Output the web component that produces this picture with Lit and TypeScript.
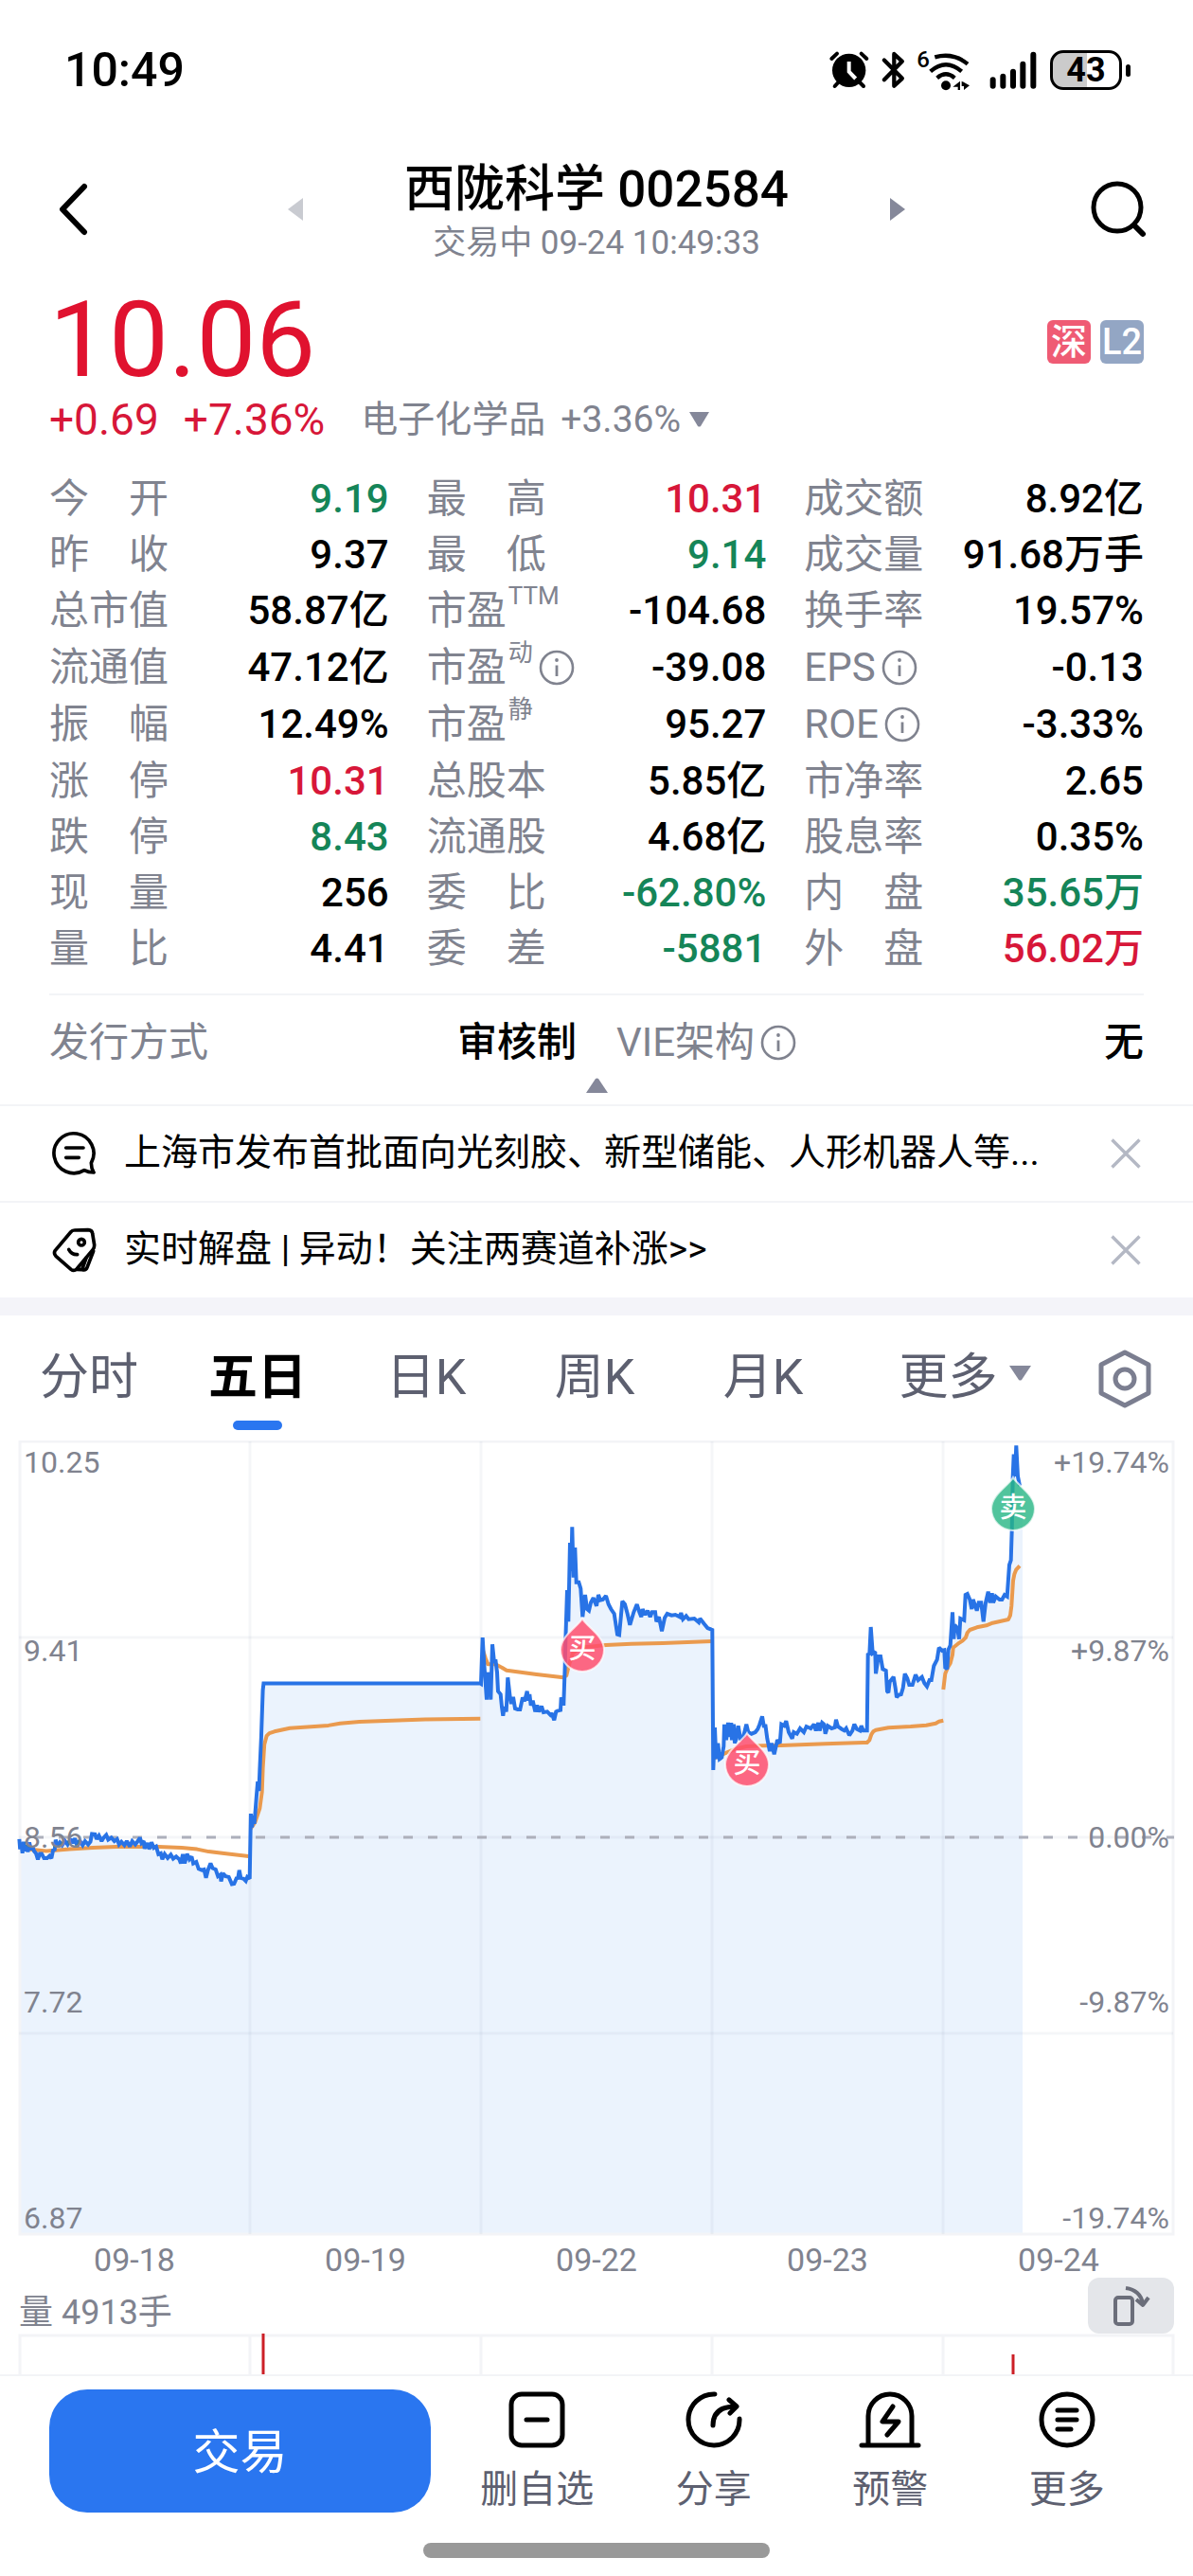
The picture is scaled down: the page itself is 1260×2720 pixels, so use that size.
import { LitElement, html, svg, css, nothing } from "lit";
import { customElement, state } from "lit/decorators.js";
import { classMap } from "lit/directives/class-map.js";

type Tone = "up" | "down" | "";
interface Stat {
  label: string;
  value: string;
  tone?: Tone;
  sup?: string;
  info?: boolean;
}

const s = (label: string, value: string, tone: Tone = "", sup = "", info = false): Stat => ({ label, value, tone, sup, info });

const STATS: Stat[][] = [
  [s("今开", "9.19", "down"), s("最高", "10.31", "up"), s("成交额", "8.92亿")],
  [s("昨收", "9.37"), s("最低", "9.14", "down"), s("成交量", "91.68万手")],
  [s("总市值", "58.87亿"), s("市盈", "-104.68", "", "TTM"), s("换手率", "19.57%")],
  [s("流通值", "47.12亿"), s("市盈", "-39.08", "", "动", true), s("EPS", "-0.13", "", "", true)],
  [s("振幅", "12.49%"), s("市盈", "95.27", "", "静"), s("ROE", "-3.33%", "", "", true)],
  [s("涨停", "10.31", "up"), s("总股本", "5.85亿"), s("市净率", "2.65")],
  [s("跌停", "8.43", "down"), s("流通股", "4.68亿"), s("股息率", "0.35%")],
  [s("现量", "256"), s("委比", "-62.80%", "down"), s("内盘", "35.65万", "down")],
  [s("量比", "4.41"), s("委差", "-5881", "down"), s("外盘", "56.02万", "up")],
];

/* Converts a run of "x,y" samples, taken on a finer grid, to chart units. */
function plot(x0: number, y0: number, sx: number, sy: number, data: string): string[] {
  return data
    .trim()
    .split(/\s+/)
    .map((p) => {
      const [x, y] = p.split(",").map(Number);
      return `${(x0 + x / sx).toFixed(1)},${(y0 + y / sy).toFixed(1)}`;
    });
}

const EARLY = (d: string) => plot(0, -22, 2.45, 2.8, d);
const MID = (d: string) => plot(500, 78, 3, 3, d);
const LATE = (d: string) => plot(745, -2, 3, 3, d);

const PRICE: string[] = [
  ...EARLY(`50,1240 52,1270 55,1250 58,1282 61,1248 64,1275 68,1258 72,1278 76,1250 80,1272 84,1262 88,1275 93,1282
    98,1300 103,1284 108,1284 114,1296 122,1296 128,1290 133,1297 138,1270 141,1275 144,1242 149,1262 155,1250
    161,1258 168,1246 175,1256 183,1240 188,1252 194,1238 200,1262 206,1244 214,1258 220,1246 228,1256 234,1248
    238,1225 246,1226 250,1240 256,1230 263,1246 268,1236 275,1228 280,1242 288,1236 296,1246 303,1240 308,1256
    314,1248 322,1258 328,1246 336,1262 342,1246 350,1256 358,1244 362,1236 366,1252 372,1246 374,1268 382,1252
    386,1270 392,1250 398,1266 404,1262 410,1285 416,1282 420,1300 426,1284 434,1296 442,1286 448,1298 456,1292
    464,1300 468,1312 473,1285 478,1312 484,1284 490,1300 496,1292 500,1312 508,1308 514,1328 522,1332 528,1330
    533,1355 538,1332 545,1312 550,1326 558,1330 564,1350 570,1345 572,1365 577,1342 584,1350 592,1352 600,1373
    606,1372 612,1356 616,1355 619,1332 623,1355 630,1357 636,1364 640,1352 646,1357
    649,1165 652,1205 656,1170 658,1195 660,1168 664,1110 667,1070 670,1098 672,1040 676,940 680,800 682,780 1243,780`),
  ...MID(`24,537 29,390 33,460 38,530 42,587 44,500 48,560 50,500 55,587 60,412 66,470 70,460 75,500 78,560 86,570
    90,610 94,638 98,610 104,625 109,517 116,580 120,600 126,578 132,615 140,618 148,618 156,580 162,592 170,560
    174,590 178,570 182,605 188,590 196,625 202,605 208,625 216,608 222,627 234,625 244,635 248,630 256,652
    262,625 268,622 276,620 278,580 283,600 286,600 290,480 292,400 297,240 301,340 306,90 310,180 313,40 317,200
    322,105 326,215 334,215 340,235 346,325 354,255 360,300 366,305 372,280 380,265 390,290 396,255 402,272
    410,270 420,258 428,285 436,300 446,315 456,380 462,382 472,275 480,285 488,315 496,350 508,310 518,285
    526,310 532,325 536,300 544,318 552,305 560,325 566,310 576,310 580,340 588,325 597,370 606,328 614,315
    628,320 640,318 654,325 658,312 664,332 674,322 682,332 700,330 714,342 718,330 732,348 742,360 754,365`),
  ...LATE(`22,602 25,1050 30,915 34,1015 40,965 45,1015 52,1010 58,975 60,905 66,955 72,900 76,945 82,900 84,955
    90,905 93,965 98,950 104,910 112,955 120,945 130,905 136,930 146,935 158,930 166,920 172,905 180,880 186,915
    190,905 196,950 204,990 210,965 218,1000 228,955 236,965 241,905 250,910 256,895 264,930 275,950 280,930
    290,935 300,918 312,930 320,912 334,918 344,905 350,925 358,900 362,925 370,900 376,905 380,935 388,910
    400,918 410,915 414,890 420,912 432,920 440,925 446,918 456,940 466,925 472,905 480,920 490,925 494,910
    500,925 512,925 515,680 520,685 524,597 530,680 538,675 540,745 548,690 555,690 562,730 572,735 576,800
    580,805 584,770 596,755 602,790 606,820 612,812 620,810 626,790 632,745 640,760 646,780 656,780 666,748
    674,765 686,755 694,775 702,785 710,765 716,765 724,720 734,700 740,662 750,672 757,670 760,725 766,730
    770,668 776,655 783,550 787,635 790,590 798,600 804,635 808,570 820,575 824,495 830,492 838,510 844,540
    848,510 860,545 866,520 874,520 881,580 888,520 896,485 902,520 908,490 912,520 920,500 932,510 940,510
    948,495 956,500 963,400 968,385 971,290 974,120 977,50 981,120 985,22 990,120 996,150`),
];

const AVERAGES: string[][] = [
  EARLY("52,1262 70,1270 120,1275 180,1270 240,1266 300,1263 410,1263 470,1266 510,1270 540,1277 580,1282 643,1291"),
  EARLY("648,1210 660,1190 672,1150 678,1100 680,1030 684,960 690,935 697,927 710,922 750,912 850,904 880,898 930,893 1100,886 1243,884"),
  MID("30,430 38,455 46,475 70,475 90,485 105,494 150,500 200,507 285,517 295,510 302,480 315,440 340,422 420,414 500,410 600,408 755,402"),
  LATE("28,1012 60,998 90,985 130,975 180,973 240,972 380,967 500,963 512,963 520,955 526,937 532,928 540,923 580,916 650,912 700,908 730,902 740,896 754,893"),
  LATE("754,795 760,745 768,725 776,712 783,685 785,662 800,650 815,640 825,630 830,615 838,606 860,598 890,592 910,584 960,573 966,560 970,530 975,450 979,430 985,415 996,403"),
];

const DATES = ["09-18", "09-19", "09-22", "09-23", "09-24"];
const PRICE_AXIS: [string, string, number][] = [
  ["10.25", "+19.74%", 34],
  ["9.41", "+9.87%", 233],
  ["8.56", "0.00%", 430],
  ["7.72", "-9.87%", 604],
  ["6.87", "-19.74%", 832],
];
const MARKS: [string, string, number, number][] = [
  ["买", "buy", 615, 220],
  ["买", "buy", 789, 341],
  ["卖", "sell", 1070, 71],
];

const infoIcon = html`<svg class="info" viewBox="0 0 38 38" aria-hidden="true">
  <circle cx="19" cy="19" r="17" fill="none" stroke="currentColor" stroke-width="2.6" />
  <path d="M19 16.500V28" stroke="currentColor" stroke-width="2.800" />
  <circle cx="19" cy="11" r="1.900" fill="currentColor" />
</svg>`;

const closeIcon = html`<svg viewBox="0 0 32 32" width="32" height="32" aria-hidden="true">
  <path d="M1.500 1.500L30.500 30.500M30.500 1.500L1.500 30.500" stroke="#b4b8c4" stroke-width="3.4" fill="none" />
</svg>`;

@customElement("status-bar")
export class StatusBar extends LitElement {
  static styles = css`
    :host {
      display: flex;
      align-items: center;
      justify-content: space-between;
      height: 148px;
      padding: 0 66px 0 68px;
    }
    .time {
      font-size: 50px;
      font-weight: 500;
    }
    .icons {
      display: flex;
      align-items: center;
      gap: 12px;
    }
    .icons svg {
      display: block;
      overflow: visible;
    }
    .signal {
      margin-left: 8px;
    }
    .battery {
      display: flex;
      align-items: center;
      gap: 4px;
      margin-left: 2px;
    }
    .cell {
      box-sizing: border-box;
      width: 76px;
      height: 42px;
      border: 3px solid #000;
      border-radius: 14px;
      background: linear-gradient(90deg, #cbcbcb 51%, #fff 51%);
      font-size: 36px;
      font-weight: 700;
      line-height: 37px;
      text-align: center;
    }
    .nub {
      width: 5px;
      height: 13px;
      border-radius: 3px;
      background: #000;
    }
    .six {
      font-size: 72px;
      font-weight: 500;
    }
  `;

  render() {
    return html`
      <span class="time">10:49</span>
      <div class="icons">
        <svg width="42" height="40" viewBox="104 73 126 120" aria-hidden="true">
          <circle cx="166" cy="134" r="53" />
          <path d="M111 97L128 81M222 97L205 81M132 172L121 184M200 172L212 184" stroke="#000" stroke-width="12" stroke-linecap="round" />
          <path d="M166 106V138L187 160" fill="none" stroke="#fff" stroke-width="12" />
        </svg>
        <svg width="27" height="40" viewBox="272 70 81 122" aria-hidden="true">
          <path d="M283 99L341 158L315 182V79L341 103L283 162" fill="none" stroke="#000" stroke-width="13" stroke-linecap="round" stroke-linejoin="round" />
        </svg>
        <svg width="56" height="42" viewBox="388 64 168 126" aria-hidden="true">
          <text class="six" x="386" y="119">6</text>
          <path d="M443 86Q502 70 547 108M429 131Q478 88 528 131M450 152Q478 128 506 152" fill="none" stroke="#000" stroke-width="13" />
          <circle cx="478" cy="176" r="15" />
          <path d="M500 180L523 162V190H516V180ZM528 162L553 176L535 190V178H528Z" />
        </svg>
        <svg class="signal" width="50" height="40" viewBox="615 71 150 120" aria-hidden="true">
          <path d="M626 162V181M658 151V181M690 136V181M721 112V181M754 82V181" stroke="#000" stroke-width="18" stroke-linecap="round" />
        </svg>
        <div class="battery"><span class="cell">43</span><span class="nub"></span></div>
      </div>
    `;
  }
}

@customElement("trend-chart")
export class TrendChart extends LitElement {
  static styles = css`
    :host {
      display: block;
    }
    svg {
      display: block;
      width: 100%;
      height: auto;
    }
    .frame {
      fill: none;
      stroke: #f3f4f7;
      stroke-width: 3;
    }
    .grid {
      stroke: #3c5078;
      stroke-opacity: 0.05;
      stroke-width: 3;
    }
    .zero {
      stroke: #adb0bb;
      stroke-width: 3;
      stroke-dasharray: 10 16;
      stroke-dashoffset: 10;
    }
    .area {
      fill: #ebf3fd;
    }
    .price {
      fill: none;
      stroke: #2873e6;
      stroke-width: 4;
      stroke-linejoin: miter;
      stroke-miterlimit: 2;
    }
    .avg {
      fill: none;
      stroke: #ea9a4e;
      stroke-width: 4;
      stroke-linejoin: round;
    }
    .axis {
      font-size: 32px;
      fill: #80838f;
    }
    .date {
      font-size: 34px;
      fill: #80838f;
      text-anchor: middle;
    }
    .end {
      text-anchor: end;
    }
    .mark {
      stroke: #fff;
      stroke-opacity: 0.7;
      stroke-width: 2;
    }
    .buy {
      fill: #ff4d6d;
      fill-opacity: 0.85;
    }
    .sell {
      fill: #25b583;
      fill-opacity: 0.8;
    }
    .mark-text {
      font-size: 29px;
      font-weight: 500;
      fill: #fff;
      text-anchor: middle;
    }
  `;

  render() {
    const line = PRICE.join(" ");
    return html`
      <svg viewBox="0 0 1260 890" role="img" aria-label="五日">
        <polygon class="area" points="20,838 ${line} 1080,50 1080,838" />
        <rect class="frame" x="21" y="1" width="1218" height="837" />
        ${[264, 508, 752, 996].map((x) => svg`<line class="grid" x1=${x} x2=${x} y1="1" y2="838" />`)}
        ${[208, 419, 626].map((y) => svg`<line class="grid" x1="20" x2="1239" y1=${y} y2=${y} />`)}
        <line class="zero" x1="20" x2="1240" y1="419" y2="419" />
        ${AVERAGES.map((a) => svg`<polyline class="avg" points=${a.join(" ")} />`)}
        <polyline class="price" points=${line} />
        ${PRICE_AXIS.map(
          ([price, pct, y]) => svg`
            <text class="axis" x="25" y=${y}>${price}</text>
            <text class="axis end" x="1235" y=${y}>${pct}</text>`,
        )}
        ${MARKS.map(
          ([label, kind, x, y]) => svg`
            <path class="mark ${kind}" transform="translate(${x} ${y})"
              d="M0 -32C4 -24 23 -14 23 1A23 23 0 0 1 -23 1C-23 -14 -4 -24 0 -32Z" />
            <text class="mark-text" x=${x} y=${y + 10}>${label}</text>`,
        )}
        ${DATES.map((d, i) => svg`<text class="date" x=${142 + i * 244} y="877">${d}</text>`)}
      </svg>
    `;
  }
}

@customElement("app-root")
export class AppRoot extends LitElement {
  @state() private tab = "五日";
  @state() private closed: string[] = [];

  static styles = css`
    :host {
      display: block;
      background: #fff;
      color: #000;
      font-family: Roboto, "Noto Sans CJK SC", sans-serif;
    }
    button {
      margin: 0;
      padding: 0;
      border: 0;
      background: none;
      color: inherit;
      font: inherit;
      cursor: pointer;
    }
    svg {
      display: block;
      flex: none;
    }
    .up {
      color: #d71739;
    }
    .down {
      color: #158558;
    }

    .header {
      display: flex;
      align-items: center;
      height: 146px;
      padding: 0 48px 0 60px;
    }
    .header .title {
      flex: 1;
      display: flex;
      justify-content: space-between;
      align-items: center;
      padding: 0 196px 0 210px;
    }
    .names {
      padding-top: 10px;
      text-align: center;
    }
    h1 {
      margin: 0;
      font-size: 53px;
      font-weight: 500;
      line-height: 62px;
      white-space: nowrap;
    }
    .session {
      font-size: 35px;
      line-height: 52px;
      color: #80838f;
      white-space: nowrap;
    }

    .quote {
      display: flex;
      justify-content: space-between;
      padding: 9px 52px 0;
    }
    .last {
      font-size: 112px;
      line-height: 112px;
      color: #e0122f;
    }
    .change {
      display: flex;
      align-items: center;
      gap: 26px;
      font-size: 46px;
      line-height: 56px;
    }
    .sector {
      display: flex;
      align-items: center;
      gap: 8px;
      margin-left: 12px;
      font-size: 39px;
      color: #80838f;
    }
    .sector b {
      margin-left: 8px;
      font-weight: 400;
    }
    .badges {
      display: flex;
      gap: 10px;
      padding-top: 35px;
    }
    .badge {
      width: 46px;
      height: 46px;
      border-radius: 6px;
      background: #ef5b74;
      color: #fff;
      font-size: 38px;
      line-height: 46px;
      font-weight: 500;
      text-align: center;
    }
    .badge.level {
      background: #93a6c4;
    }

    .stats {
      display: grid;
      grid-template-columns: repeat(3, 1fr);
      column-gap: 40px;
      margin: 0 52px;
      padding: 26px 0 18px;
      border-bottom: 2px solid #f3f4f7;
      font-size: 42px;
      line-height: 59px;
    }
    .stat {
      display: flex;
      justify-content: space-between;
      white-space: nowrap;
    }
    .stat.tall {
      line-height: 60px;
    }
    dt {
      display: flex;
      align-items: center;
      color: #80838f;
    }
    dd {
      margin: 0;
      font-weight: 500;
    }
    .spread {
      display: flex;
      justify-content: space-between;
      min-width: 126px;
    }
    .sup {
      align-self: flex-start;
      margin-left: 2px;
      font-size: 26px;
      line-height: 28px;
    }
    .info {
      width: 38px;
      height: 38px;
      margin-left: 6px;
    }
    .issue {
      display: grid;
      grid-template-columns: repeat(2, 1fr);
      column-gap: 42px;
      margin: 0;
      padding: 20px 52px 0;
      font-size: 42px;
      line-height: 60px;
    }
    .fold {
      display: flex;
      justify-content: center;
      width: 100%;
      height: 35px;
      padding-top: 7px;
    }

    .news {
      display: flex;
      align-items: center;
      gap: 28px;
      height: 100px;
      padding: 0 55px 0 53px;
      border-top: 2px solid #f3f4f7;
    }
    .news a {
      flex: 1;
      min-width: 0;
      overflow: hidden;
      color: #000;
      font-size: 39px;
      line-height: 60px;
      padding-bottom: 3px;
      text-decoration: none;
      text-overflow: ellipsis;
      white-space: nowrap;
    }
    .band {
      height: 19px;
      background: #f4f4f9;
    }

    .tabs {
      display: grid;
      grid-template-columns: repeat(5, 178fr) 248fr 90fr;
      height: 132px;
      padding: 0 27px 0 5px;
    }
    .tab {
      display: grid;
      grid-template-rows: 101px 10px;
      justify-items: center;
      align-items: center;
      padding-top: 10px;
      font-size: 52px;
      color: #5d6070;
      white-space: nowrap;
    }
    .tab.on {
      color: #000;
      font-weight: 700;
    }
    .tab.on::after {
      content: "";
      width: 52px;
      height: 10px;
      border-radius: 5px;
      background: #2a76f0;
    }
    .tab.settings {
      padding-top: 16px;
    }
    .more {
      display: flex;
      align-items: center;
      gap: 12px;
    }

    .volume {
      display: flex;
      justify-content: space-between;
      align-items: center;
      height: 53px;
      padding: 0 20px;
      font-size: 36px;
      color: #80838f;
    }
    .rotate {
      display: grid;
      place-items: center;
      width: 91px;
      height: 59px;
      margin-bottom: 6px;
      border-radius: 12px;
      background: #e4e6ea;
    }
    .bars {
      width: 100%;
      height: auto;
    }

    .dock {
      display: flex;
      gap: 19px;
      padding: 14px 40px 0 52px;
      border-top: 2px solid #f3f4f7;
    }
    .trade {
      flex: 403;
      height: 130px;
      padding-bottom: 6px;
      border-radius: 40px;
      background: #2a76f0;
      color: #fff;
      font-size: 50px;
    }
    .actions {
      flex: 746;
      display: grid;
      grid-template-columns: repeat(4, 1fr);
      padding-top: 2px;
    }
    .action {
      display: flex;
      flex-direction: column;
      align-items: center;
      gap: 14px;
      color: #5d6070;
      font-size: 40px;
      line-height: 60px;
      white-space: nowrap;
    }
    .action svg {
      overflow: visible;
    }
    .home {
      width: 29%;
      height: 16px;
      margin: 26px auto 20px;
      border-radius: 8px;
      background: #999;
    }
  `;

  private stat(item: Stat, tall = false) {
    return html`<div class=${classMap({ stat: true, tall })}>
      <dt>
        ${/^[A-Z]/.test(item.label) || item.sup || item.label.length > 3
          ? item.label
          : html`<span class="spread">${[...item.label].map((c) => html`<span>${c}</span>`)}</span>`}
        ${item.sup ? html`<span class="sup">${item.sup}</span>` : nothing}
        ${item.info ? infoIcon : nothing}
      </dt>
      <dd class=${item.tone ?? ""}>${item.value}</dd>
    </div>`;
  }

  private news(text: string, icon: unknown) {
    if (this.closed.includes(text)) return nothing;
    return html`<div class="news">
      ${icon}
      <a href="#">${text}</a>
      <button aria-label="关闭" @click=${() => (this.closed = [...this.closed, text])}>${closeIcon}</button>
    </div>`;
  }

  private action(label: string, icon: unknown) {
    return html`<button class="action">
      <svg width="60" height="60" viewBox="0 0 60 60" fill="none" stroke="#000" stroke-width="5" stroke-linecap="round" stroke-linejoin="round" aria-hidden="true">
        ${icon}
      </svg>
      ${label}
    </button>`;
  }

  render() {
    return html`
      <status-bar></status-bar>

      <header class="header">
        <button aria-label="返回">
          <svg width="34" height="56" viewBox="0 0 34 56" fill="none" aria-hidden="true">
            <path d="M29 4L6 28L29 52" stroke="#000" stroke-width="6" stroke-linecap="round" stroke-linejoin="round" />
          </svg>
        </button>
        <div class="title">
          <button aria-label="上一只">
            <svg width="16" height="24" viewBox="0 0 16 24" aria-hidden="true"><path d="M16 0V24L0 12Z" fill="#c9cbd1" /></svg>
          </button>
          <div class="names">
            <h1>西陇科学 002584</h1>
            <div class="session">交易中 09-24 10:49:33</div>
          </div>
          <button aria-label="下一只">
            <svg width="16" height="24" viewBox="0 0 16 24" aria-hidden="true"><path d="M0 0V24L16 12Z" fill="#85889a" /></svg>
          </button>
        </div>
        <button aria-label="搜索">
          <svg width="60" height="60" viewBox="0 0 60 60" fill="none" stroke="#000" stroke-width="5" stroke-linecap="round" aria-hidden="true">
            <circle cx="28" cy="28" r="25" />
            <path d="M46 47L55 56" stroke-width="6" />
          </svg>
        </button>
      </header>

      <section class="quote">
        <div>
          <div class="last">10.06</div>
          <div class="change">
            <span class="up">+0.69</span>
            <span class="up">+7.36%</span>
            <button class="sector">
              <span>电子化学品</span><b>+3.36%</b>
              <svg width="23" height="16" viewBox="0 0 23 16" aria-hidden="true"><path d="M1 0H22L13 15Q11.500 16 10 15Z" fill="#85889a" /></svg>
            </button>
          </div>
        </div>
        <div class="badges"><span class="badge">深</span><span class="badge level">L2</span></div>
      </section>

      <dl class="stats">${STATS.map((row, i) => row.map((item) => this.stat(item, i > 1 && i < 5)))}</dl>

      <dl class="issue">
        ${this.stat(s("发行方式", "审核制"))}
        ${this.stat(s("VIE架构", "无", "", "", true))}
      </dl>
      <button class="fold" aria-label="收起">
        <svg width="23" height="16" viewBox="0 0 23 16" aria-hidden="true"><path d="M0 16H23L13 1Q11.500 0 10 1Z" fill="#85889a" /></svg>
      </button>

      ${this.news(
        "上海市发布首批面向光刻胶、新型储能、人形机器人等...",
        html`<svg width="50" height="50" viewBox="36 34 150 150" fill="none" stroke="#000" stroke-width="11" stroke-linecap="round" stroke-linejoin="round" aria-hidden="true">
          <path d="M144 162A63 63 0 1 1 166 139C166 152 169 161 174 169C162 169 153 167 144 162Z" />
          <path d="M86 91H141M86 122H127" />
        </svg>`,
      )}
      ${this.news(
        "实时解盘 | 异动！关注两赛道补涨>>",
        html`<svg width="50" height="50" viewBox="36 346 150 150" fill="none" stroke="#000" stroke-width="11" stroke-linecap="round" stroke-linejoin="round" aria-hidden="true">
          <path d="M112 358L156 357Q169 358 170 368L176 405Q176 414 171 420L120 481Q111 489 102 482L54 440Q46 431 52 422L101 364Q106 358 112 358Z" />
          <circle cx="135" cy="396" r="10" />
          <path d="M95 419Q104 436 122 435M173 424L153 476Q149 486 138 483L120 482M150 446L138 480" />
        </svg>`,
      )}
      <div class="band"></div>

      <nav class="tabs">
        ${["分时", "五日", "日K", "周K", "月K"].map(
          (t) => html`<button class=${classMap({ tab: true, on: t === this.tab })} @click=${() => (this.tab = t)}>${t}</button>`,
        )}
        <button class="tab">
          <span class="more">
            更多
            <svg width="23" height="16" viewBox="0 0 23 16" aria-hidden="true"><path d="M0 0H23L13 15Q11.500 16 10 15Z" fill="#85889a" /></svg>
          </span>
        </button>
        <button class="tab settings" aria-label="设置">
          <svg width="58" height="62" viewBox="0 0 58 62" fill="none" stroke="#7b7e90" stroke-width="5" stroke-linejoin="round" aria-hidden="true">
            <path d="M29 3L54 16V46L29 59L4 46V16Z" />
            <circle cx="29" cy="31" r="10" />
          </svg>
        </button>
      </nav>

      <trend-chart></trend-chart>

      <div class="volume">
        <span>量 4913手</span>
        <button class="rotate" aria-label="横屏">
          <svg width="40" height="44" viewBox="0 0 40 44" fill="none" stroke="#6b6e7a" stroke-width="4" stroke-linejoin="round" aria-hidden="true">
            <rect x="3" y="13" width="18" height="28" rx="3" />
            <path d="M14 3Q29 5 32 19M25 15L32 21L38 13" />
          </svg>
        </button>
      </div>
      <svg class="bars" viewBox="0 0 1260 43" aria-hidden="true">
        <path d="M21 43V2H1239V43M264 2V43M508 2V43M752 2V43M996 2V43" fill="none" stroke="#f3f4f7" stroke-width="3" />
        <path d="M278 0V43M1070 22V43" stroke="#cc1f26" stroke-width="3" />
      </svg>

      <footer>
        <div class="dock">
          <button class="trade">交易</button>
          <div class="actions">
            ${this.action("删自选", svg`<rect x="3" y="3" width="54" height="54" rx="11" /><path d="M19 30H41" />`)}
            ${this.action("分享", svg`<path d="M31 3A27 27 0 1 0 57 29M29 36C29 22 38 16 53 16M46 9L54 16L47 23" />`)}
            ${this.action("预警", svg`<path d="M0 57H60M7 57V26A23 23 0 0 1 53 26V57M33 16L22 32H39L27 46" />`)}
            ${this.action("更多", svg`<circle cx="30" cy="30" r="27" /><path d="M20 20H40M20 30H40M20 40H34" />`)}
          </div>
        </div>
        <div class="home"></div>
      </footer>
    `;
  }
}
